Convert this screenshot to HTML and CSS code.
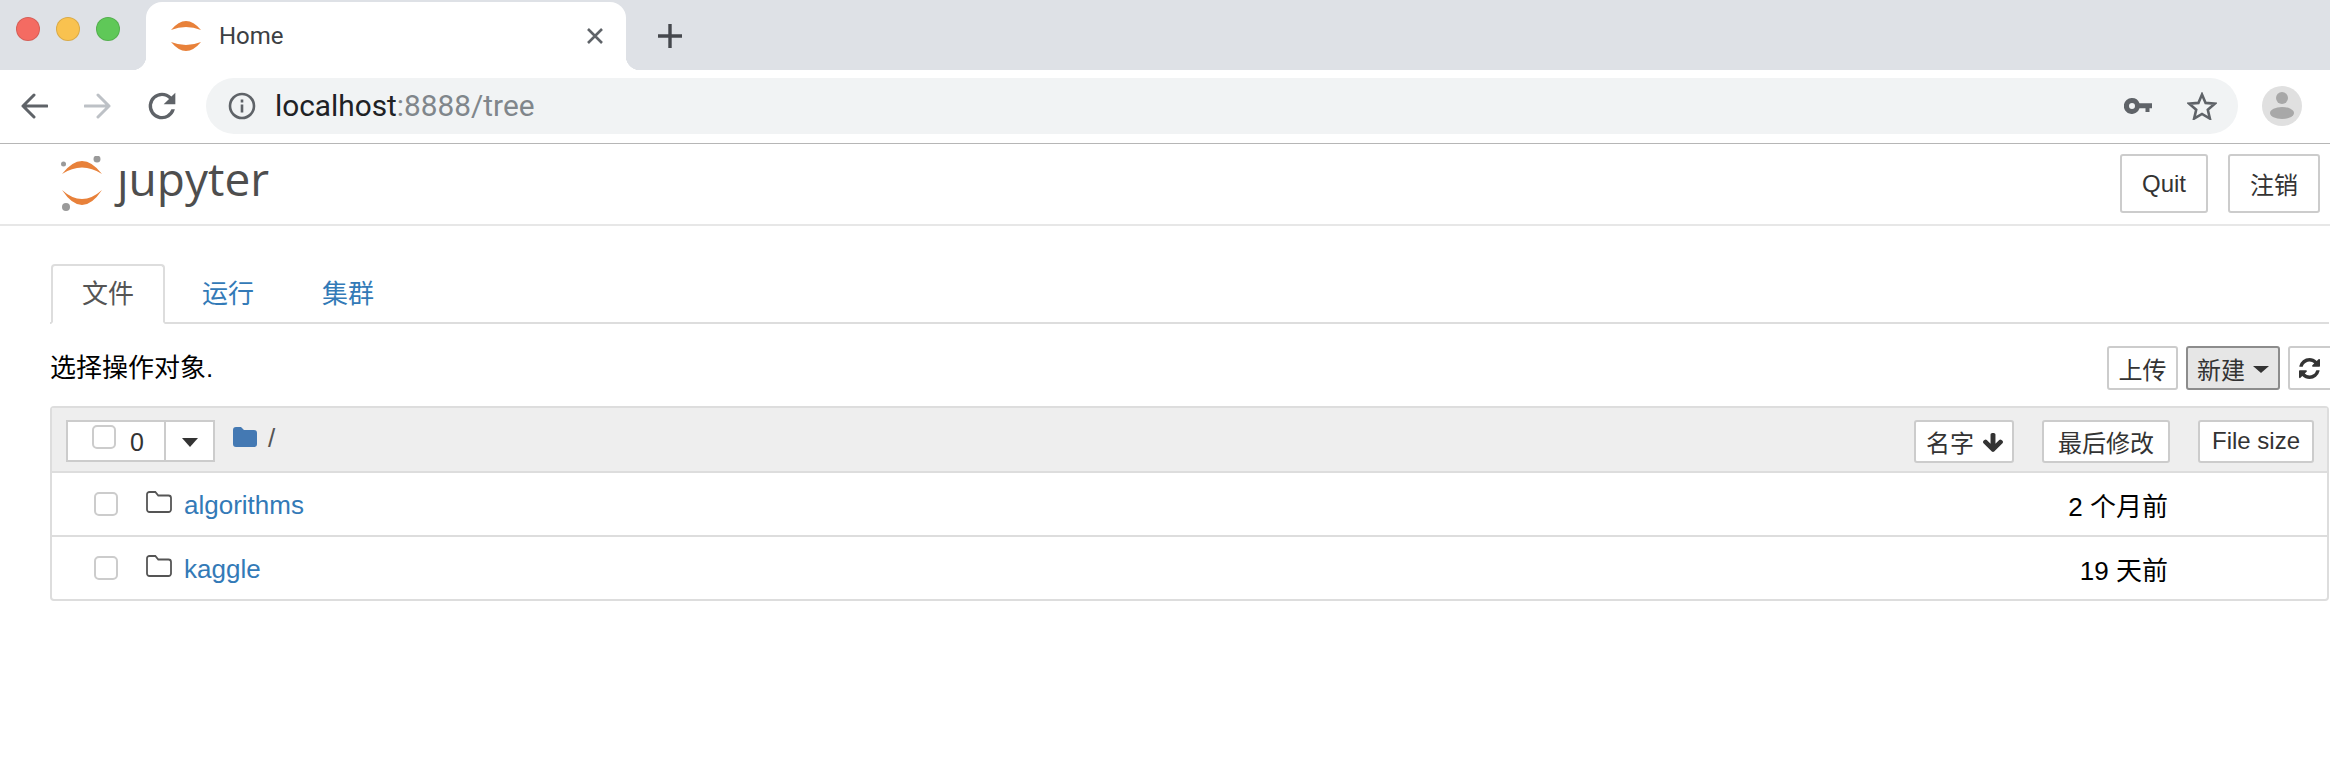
FILE: index.html
```html
<!DOCTYPE html>
<html lang="zh-CN">
<head>
  <meta charset="UTF-8">
  <title>Home</title>
  <link rel="stylesheet" href="styles.css">
</head>
<body>
  <div class="tabstrip">
    <div class="lights">
      <span class="light red"></span>
      <span class="light yellow"></span>
      <span class="light green"></span>
    </div>
    <div class="tab">
      <svg class="favicon" viewBox="0 0 30 30"><path d="M0 9Q15-9 30 9 15 3 0 9z"/><path d="M0 21Q15 39 30 21 15 27 0 21z"/></svg>
      <span class="tab-title">Home</span>
      <svg class="tab-close" viewBox="0 0 16 16"><path d="M1 1l14 14M15 1L1 15"/></svg>
    </div>
    <svg class="new-tab" viewBox="0 0 24 24"><path d="M12 0v24M0 12h24"/></svg>
  </div>

  <div class="toolbar">
    <svg class="nav-arrow" viewBox="0 0 28 28"><path d="M27 14H3M14 3L3 14l11 11"/></svg>
    <svg class="nav-arrow disabled" viewBox="0 0 28 28"><path d="M1 14h24M14 3l11 11-11 11"/></svg>
    <svg class="reload" viewBox="0 0 24 24"><path d="M17.65 6.35A7.96 7.96 0 0 0 12 4a8 8 0 1 0 7.73 10h-2.08A6 6 0 1 1 12 6c1.66 0 3.14.69 4.22 1.78L13 11h7V4z"/></svg>
    <div class="omnibox">
      <svg class="info" viewBox="0 0 28 28"><circle cx="14" cy="14" r="12"/><path d="M14 12.5v8M14 7.5v3"/></svg>
      <span class="url">localhost<span class="url-rest">:8888/tree</span></span>
      <svg class="key" viewBox="0 0 28 16"><path d="M8 0a8 8 0 0 1 7.5 5.2H28v5h-2.5V14h-4v-3.8h-6A8 8 0 1 1 8 0zm0 5a3 3 0 1 0 0 6 3 3 0 0 0 0-6z"/></svg>
      <svg class="star" viewBox="0 0 30 28"><path d="M15 2.5l3.6 8.4 9.1.8-6.9 6 2.1 8.9-7.9-4.7-7.9 4.7 2.1-8.9-6.9-6 9.1-.8z"/></svg>
    </div>
    <svg class="avatar" viewBox="0 0 40 40"><circle cx="20" cy="20" r="20" fill="#e0e0e0"/><circle cx="20" cy="12" r="6" fill="#a8a8a8"/><ellipse cx="20" cy="27" rx="12" ry="6" fill="#a8a8a8"/></svg>
  </div>

  <header class="navbar">
    <div class="logo">
      <svg class="logo-mark" viewBox="0 0 42 56">
        <path class="arc" d="M1 18Q21-8 41 18 21 5 1 18z"/>
        <path class="arc" d="M1 34Q21 64 41 34 21 52 1 34z"/>
        <circle class="moon" cx="2.5" cy="8" r="2.5"/>
        <circle class="moon" cx="36" cy="3" r="3.5"/>
        <circle class="moon" cx="5" cy="51" r="4"/>
      </svg>
      <span class="logo-text">ȷupyter</span>
    </div>
    <div class="nav-buttons">
      <button class="nav-btn quit">Quit</button>
      <button class="nav-btn">注销</button>
    </div>
  </header>

  <main class="content">
    <ul class="tabs">
      <li class="tabs-item active">文件</li>
      <li class="tabs-item">运行</li>
      <li class="tabs-item">集群</li>
    </ul>

    <div class="actions">
      <span class="hint">选择操作对象.</span>
      <div class="action-buttons">
        <button class="btn upload">上传</button>
        <button class="btn pressed">新建<span class="caret small"></span></button>
        <button class="btn refresh"><svg class="refresh-icon" viewBox="128 128 1536 1536"><path d="M1639 1056q0 5-1 7-64 268-268 434.5t-478 166.5q-146 0-282.5-55t-243.5-157l-129 129q-19 19-45 19t-45-19-19-45v-448q0-26 19-45t45-19h448q26 0 45 19t19 45-19 45l-137 137q71 66 161 102t187 36q134 0 250-65t186-179q11-17 53-117 8-23 30-23h192q13 0 22.5 9.500t9.500 22.500zm25-800v448q0 26-19 45t-45 19h-448q-26 0-45-19t-19-45 19-45l138-138q-148-137-349-137-134 0-250 65t-186 179q-11 17-53 117-8 23-30 23h-199q-13 0-22.500-9.500t-9.500-22.500v-7q65-268 270-434.500t480-166.500q146 0 284 55.500t245 156.500l130-129q19-19 45-19t45 19 19 45z"/></svg></button>
      </div>
    </div>

    <div class="file-list">
      <div class="list-header">
        <div class="select-group">
          <div class="select-main">
            <span class="checkbox head"></span>
            <span class="select-count">0</span>
          </div>
          <div class="select-toggle"><span class="caret"></span></div>
        </div>
        <svg class="crumb-folder" viewBox="0 0 24 20"><path d="M0 3a3 3 0 0 1 3-3h5l3 3h10a3 3 0 0 1 3 3v11a3 3 0 0 1-3 3H3a3 3 0 0 1-3-3z"/></svg>
        <span class="crumb-slash">/</span>
        <div class="sort-buttons">
          <button class="btn sort-name">名字<svg class="sort-arrow" viewBox="117 128 1558 1483"><path d="M1675 832q0 53-37 90l-651 652q-39 37-91 37-53 0-90-37l-651-652q-38-36-38-90 0-53 38-91l74-75q39-37 91-37 53 0 90 37l294 294v-704q0-52 38-90t90-38h128q52 0 90 38t38 90v704l294-294q37-37 90-37 52 0 91 37l75 75q37 39 37 91z"/></svg></button>
          <button class="btn sort-modified">最后修改</button>
          <button class="btn sort-size">File size</button>
        </div>
      </div>
      <div class="list-row">
        <span class="checkbox"></span>
        <svg class="row-folder" viewBox="0 0 26 22"><path d="M1 3.5A2.5 2.5 0 0 1 3.500 1h5.800l3 3.500h10.200A2.500 2.500 0 0 1 25 7v11.500a2.500 2.500 0 0 1-2.500 2.500h-19A2.500 2.500 0 0 1 1 18.500z"/></svg>
        <a class="item-link">algorithms</a>
        <span class="item-time">2 个月前</span>
      </div>
      <div class="list-row">
        <span class="checkbox"></span>
        <svg class="row-folder" viewBox="0 0 26 22"><path d="M1 3.5A2.5 2.5 0 0 1 3.500 1h5.800l3 3.500h10.200A2.500 2.500 0 0 1 25 7v11.500a2.500 2.500 0 0 1-2.500 2.500h-19A2.500 2.500 0 0 1 1 18.500z"/></svg>
        <a class="item-link">kaggle</a>
        <span class="item-time">19 天前</span>
      </div>
    </div>
  </main>
</body>
</html>
```

FILE: styles.css
```css
* {
  box-sizing: border-box;
}
html, body {
  margin: 0;
  overflow: hidden;
}
body {
  font-family: "Liberation Sans", "Noto Sans CJK SC", sans-serif;
  background: #fff;
  color: #000;
}
button {
  font-family: inherit;
}

/* browser tabs */
.tabstrip {
  display: flex;
  height: 70px;
  padding-top: 2px;
  background: #dee1e6;
}
.lights {
  display: flex;
  gap: 16px;
  width: 146px;
  padding: 15px 0 0 16px;
}
.light {
  width: 24px;
  height: 24px;
  border-radius: 50%;
  border: 1px solid rgba(0, 0, 0, 0.12);
}
.red { background: #f46b62; }
.yellow { background: #f9c24f; }
.green { background: #5fc858; }
.tab {
  position: relative;
  display: flex;
  align-items: center;
  width: 480px;
  padding: 0 23px 0 25px;
  background: #fff;
  border-radius: 16px 16px 0 0;
}
.tab::before, .tab::after {
  content: "";
  position: absolute;
  bottom: 0;
  width: 14px;
  height: 14px;
}
.tab::before {
  left: -14px;
  background: radial-gradient(circle at 0 0, transparent 14px, #fff 14.5px);
}
.tab::after {
  right: -14px;
  background: radial-gradient(circle at 100% 0, transparent 14px, #fff 14.5px);
}
.favicon {
  width: 30px;
  height: 30px;
  fill: #e8813a;
  overflow: visible;
}
.tab-title {
  margin-left: 18px;
  font-family: Roboto, sans-serif;
  font-size: 24px;
  color: #3c4043;
}
.tab-close {
  width: 16px;
  height: 16px;
  margin-left: auto;
  fill: none;
  stroke: #5f6368;
  stroke-width: 2.6;
}
.new-tab {
  width: 24px;
  height: 24px;
  margin: 22px 0 0 32px;
  fill: none;
  stroke: #45484d;
  stroke-width: 3.4;
  stroke-linecap: round;
}

/* address bar */
.toolbar {
  display: flex;
  align-items: center;
  height: 74px;
  padding: 0 28px 2px 20px;
  border-bottom: 1px solid #b6b6b6;
}
.nav-arrow {
  width: 28px;
  height: 28px;
  margin-right: 36px;
  fill: none;
  stroke: #5f6368;
  stroke-width: 3;
  stroke-linecap: round;
  stroke-linejoin: round;
}
.nav-arrow.disabled {
  margin-right: 30px;
  stroke: #bdc1c6;
}
.reload {
  width: 40px;
  height: 40px;
  margin-right: 24px;
  fill: #5f6368;
}
.omnibox {
  display: flex;
  align-items: center;
  flex: 1;
  height: 56px;
  padding: 0 21px 0 22px;
  background: #f1f3f4;
  border-radius: 28px;
}
.info {
  width: 28px;
  height: 28px;
  margin-right: 19px;
  fill: none;
  stroke: #5f6368;
  stroke-width: 2.6;
}
.url {
  font-family: Roboto, sans-serif;
  font-size: 29.8px;
  color: #202124;
}
.url-rest {
  color: #80868b;
}
.key {
  width: 28px;
  height: 16px;
  margin-left: auto;
  fill: #5f6368;
}
.star {
  width: 30px;
  height: 28px;
  margin-left: 35px;
  fill: none;
  stroke: #5f6368;
  stroke-width: 2.6;
}
.avatar {
  width: 40px;
  height: 40px;
  margin-left: 24px;
}

/* jupyter header */
.navbar {
  display: flex;
  justify-content: space-between;
  height: 82px;
  padding: 10px 10px 0 61px;
  border-bottom: 2px solid #e7e7e7;
}
.logo {
  display: flex;
  align-items: flex-start;
}
.logo-mark {
  width: 42px;
  height: 56px;
  margin-top: 2px;
}
.arc {
  fill: #e8813a;
}
.moon {
  fill: #9a9a9a;
}
.logo-text {
  margin: -1px 0 0 14px;
  font-family: "Open Sans", sans-serif;
  font-size: 46px;
  line-height: 50px;
  color: #4e4e4e;
}
.nav-buttons {
  display: flex;
  gap: 20px;
  height: 59px;
}
.nav-btn {
  width: 92px;
  padding: 0 0 0 0;
  font-size: 24px;
  color: #333;
  background: #fff;
  border: 2px solid #ccc;
  border-radius: 3px;
}
.nav-btn.quit {
  width: 88px;
}

/* nav tabs */
.content {
  padding: 38px 1px 0 50px;
}
.tabs {
  display: flex;
  gap: 6px;
  height: 60px;
  margin: 0;
  padding: 0 0 0 1px;
  list-style: none;
  border-bottom: 2px solid #ddd;
}
.tabs-item {
  height: 60px;
  padding: 0 29px;
  font-size: 26px;
  line-height: 56px;
  color: #337ab7;
  border: 2px solid transparent;
  border-radius: 4px 4px 0 0;
}
.tabs-item.active {
  color: #555;
  background: #fff;
  border-color: #ddd;
  border-bottom-color: #fff;
}

/* action row */
.actions {
  display: flex;
  align-items: center;
  justify-content: space-between;
  height: 44px;
  margin-top: 22px;
}
.hint {
  padding-bottom: 6px;
  font-size: 26px;
}
.action-buttons {
  display: flex;
  gap: 8px;
  height: 44px;
  margin-right: -13px;
}
.btn {
  display: flex;
  align-items: center;
  padding: 0 9px;
  font-size: 24px;
  color: #333;
  background: #fff;
  border: 2px solid #ccc;
  border-radius: 3px;
  white-space: nowrap;
}
.btn.upload {
  padding: 0 9.5px;
}
.btn.pressed {
  background: #e6e6e6;
  border-color: #8c8c8c;
}
.btn.refresh {
  width: 54px;
}
.btn.sort-name {
  padding: 0 9px 0 10px;
}
.btn.sort-modified {
  padding: 0 14px;
}
.btn.sort-size {
  padding: 0 12px;
}
.refresh-icon {
  width: 21px;
  height: 21px;
  fill: #333;
}
.caret {
  display: block;
  width: 0;
  height: 0;
  border-style: solid;
  border-width: 9px 8px 0;
  border-color: #333 transparent transparent;
}
.caret.small {
  margin: 2px 0 0 8px;
  border-width: 7px 8px 0;
}

/* file list */
.file-list {
  margin-top: 16px;
  border: 2px solid #ddd;
  border-radius: 4px;
}
.list-header {
  display: flex;
  align-items: center;
  height: 65px;
  padding: 3px 13px 0 14px;
  background: #eee;
  border-bottom: 2px solid #ddd;
}
.select-group {
  display: flex;
  width: 149px;
  height: 42px;
  background: #fff;
  border: 2px solid #ccc;
}
.select-main {
  display: flex;
  align-items: flex-start;
  width: 98px;
  padding: 3px 0 0 24px;
  border-right: 2px solid #ccc;
}
.select-count {
  margin: 2px 0 0 14px;
  font-size: 25px;
  line-height: 30px;
  color: #333;
}
.select-toggle {
  display: flex;
  align-items: center;
  justify-content: center;
  flex: 1;
  padding-top: 3px;
}
.crumb-folder {
  width: 24px;
  height: 20px;
  margin: 0 11px 8px 18px;
  fill: #4479b3;
}
.crumb-slash {
  margin-bottom: 6px;
  font-size: 26px;
  color: #555;
}
.sort-buttons {
  display: flex;
  gap: 28px;
  height: 43px;
  margin-left: auto;
}
.sort-arrow {
  width: 20px;
  height: 19px;
  margin: 2px 0 0 9px;
  fill: #333;
}
.list-row {
  display: flex;
  align-items: center;
  height: 64px;
  padding: 0 159px 0 42px;
  border-bottom: 2px solid #ddd;
}
.list-row:last-child {
  height: 62px;
  border-bottom: none;
}
.checkbox {
  display: block;
  width: 24px;
  height: 24px;
  background: #fff;
  border: 2px solid #ccc;
  border-radius: 5px;
}
.row-folder {
  width: 26px;
  height: 22px;
  margin: 0 12px 4px 28px;
  fill: none;
  stroke: #555;
  stroke-width: 1.8;
}
.item-link {
  margin-top: 3px;
  font-size: 26px;
  color: #337ab7;
}
.item-time {
  margin-left: auto;
  font-size: 26px;
  color: #000;
}
```
